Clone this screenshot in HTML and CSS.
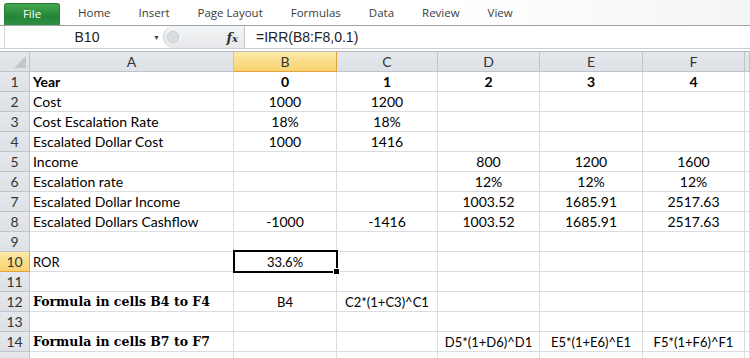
FILE: index.html
```html
<!DOCTYPE html>
<html lang="en">
<head>
    <meta charset="UTF-8">
    <title>IRR - Excel</title>
    <link rel="stylesheet" href="styles.css">
</head>
<body>
    <div class="tabs">
        <div class="tab file">File</div>
        <div class="tab">Home</div>
        <div class="tab">Insert</div>
        <div class="tab">Page Layout</div>
        <div class="tab">Formulas</div>
        <div class="tab">Data</div>
        <div class="tab">Review</div>
        <div class="tab">View</div>
    </div>
    <div class="formula-bar">
        <div class="name-box">
            <span class="cell-ref">B10</span>
            <span class="drop">&#9660;</span>
        </div>
        <div class="fx-area">
            <span class="knob"></span>
            <span class="fx">f<i>x</i></span>
        </div>
        <div class="formula">=IRR(B8:F8,0.1)</div>
    </div>
    <div class="gap"></div>
    <table class="sheet">
        <colgroup>
            <col class="c-row"><col class="c-a"><col class="c-b"><col class="c-c"><col class="c-d"><col class="c-e"><col class="c-f"><col>
        </colgroup>
        <tr class="head">
            <th class="corner"><span class="tri"></span></th>
            <th>A</th><th class="sel">B</th><th>C</th><th>D</th><th>E</th><th>F</th><th></th>
        </tr>
        <tr><th>1</th><td class="lbl b">Year</td><td class="b">0</td><td class="b">1</td><td class="b">2</td><td class="b">3</td><td class="b">4</td><td></td></tr>
        <tr><th>2</th><td class="lbl">Cost</td><td>1000</td><td>1200</td><td></td><td></td><td></td><td></td></tr>
        <tr><th>3</th><td class="lbl">Cost Escalation Rate</td><td>18%</td><td>18%</td><td></td><td></td><td></td><td></td></tr>
        <tr><th>4</th><td class="lbl">Escalated Dollar Cost</td><td>1000</td><td>1416</td><td></td><td></td><td></td><td></td></tr>
        <tr><th>5</th><td class="lbl">Income</td><td></td><td></td><td>800</td><td>1200</td><td>1600</td><td></td></tr>
        <tr><th>6</th><td class="lbl">Escalation rate</td><td></td><td></td><td>12%</td><td>12%</td><td>12%</td><td></td></tr>
        <tr><th>7</th><td class="lbl">Escalated Dollar Income</td><td></td><td></td><td>1003.52</td><td>1685.91</td><td>2517.63</td><td></td></tr>
        <tr><th>8</th><td class="lbl">Escalated Dollars Cashflow</td><td>-1000</td><td>-1416</td><td>1003.52</td><td>1685.91</td><td>2517.63</td><td></td></tr>
        <tr><th>9</th><td></td><td></td><td></td><td></td><td></td><td></td><td></td></tr>
        <tr><th class="sel">10</th><td class="lbl sm">ROR</td><td class="sm active">33.6%<span class="handle"></span></td><td></td><td></td><td></td><td></td><td></td></tr>
        <tr><th>11</th><td></td><td></td><td></td><td></td><td></td><td></td><td></td></tr>
        <tr><th>12</th><td class="lbl serif">Formula in cells B4 to F4</td><td class="sm">B4</td><td class="sm">C2*(1+C3)^C1</td><td></td><td></td><td></td><td></td></tr>
        <tr><th>13</th><td></td><td></td><td></td><td></td><td></td><td></td><td></td></tr>
        <tr><th>14</th><td class="lbl serif">Formula in cells B7 to F7</td><td></td><td></td><td class="sm">D5*(1+D6)^D1</td><td class="sm">E5*(1+E6)^E1</td><td class="sm">F5*(1+F6)^F1</td><td></td></tr>
        <tr><th></th><td></td><td></td><td></td><td></td><td></td><td></td><td></td></tr>
    </table>
</body>
</html>
```

FILE: styles.css
```css
body {
    margin: 0;
    width: 750px;
    height: 358px;
    overflow: hidden;
    background-color: #fff;
    font-family: Lato, "Liberation Sans", sans-serif;
}
.tabs {
    display: flex;
    align-items: flex-end;
    height: 26px;
    padding-left: 4px;
    box-sizing: border-box;
    border-bottom: 1px solid #9ea3a9;
    background: linear-gradient(to right, #fff 60%, #f4f5f7);
    font-family: "Open Sans", "Liberation Sans", sans-serif;
    font-size: 11.5px;
    color: #3c3c3c;
}
.tab {
    height: 22px;
    line-height: 20px;
    padding: 0 14px;
}
.tab.file {
    width: 56px;
    box-sizing: border-box;
    padding: 0;
    margin-right: 4px;
    text-align: center;
    color: #fff;
    border-radius: 3px 3px 0 0;
    background: linear-gradient(#45a84f, #23843a 60%, #2f8f40);
    border: 1px solid #2d7a34;
    border-bottom: none;
}
.formula-bar {
    display: flex;
    height: 22px;
    border-bottom: 1px solid #c9ccd1;
    font-size: 14px;
    color: #222;
}
.name-box {
    display: flex;
    align-items: center;
    width: 159px;
    margin-left: 4px;
    box-sizing: border-box;
    border-left: 1px solid #d2d5d9;
}
.cell-ref {
    flex: 1;
    text-align: center;
    padding-left: 16px;
    font-family: "Liberation Sans", sans-serif;
}
.drop {
    font-size: 7px;
    color: #444;
    width: 10px;
}
.fx-area {
    display: flex;
    align-items: center;
    justify-content: space-between;
    width: 82px;
    box-sizing: border-box;
    padding: 0 6px 0 3px;
    background: linear-gradient(#f3f4f6, #e6e8eb);
    border-radius: 11px 0 0 11px;
    border-left: 1px solid #cfd2d6;
    border-right: 1px solid #c3c7cc;
}
.knob {
    width: 10px;
    height: 10px;
    border-radius: 50%;
    background: #d9dce0;
    border: 1px solid #c6cace;
}
.fx {
    font-family: "DejaVu Serif", serif;
    font-style: italic;
    font-weight: bold;
    font-size: 13px;
    color: #333;
}
.fx i {
    font-size: 10px;
}
.formula {
    flex: 1;
    padding-left: 11px;
    line-height: 22px;
    font-family: "Liberation Sans", sans-serif;
}
.gap {
    height: 2px;
    border-bottom: 1px solid #b5b9be;
}
.sheet {
    width: 750px;
    table-layout: fixed;
    border-collapse: separate;
    border-spacing: 0;
    font-size: 14px;
    color: #000;
}
.c-row { width: 30px; }
.c-a { width: 204px; }
.c-b { width: 103px; }
.c-c { width: 101px; }
.c-d { width: 102px; }
.c-e { width: 103px; }
.c-f { width: 102px; }
tr {
    height: 20px;
}
th, td {
    padding: 0;
    height: 19px;
    border-right: 1px solid #dadcdd;
    border-bottom: 1px solid #dadcdd;
    text-align: center;
    white-space: nowrap;
    overflow: hidden;
}
th {
    font-weight: normal;
    font-size: 14px;
    color: #333;
    background: linear-gradient(#e5e8ec, #dde1e6);
    border-color: #bfc4ca;
}
.head th {
    color: #30343a;
}
th.sel {
    background: linear-gradient(#fde9a8, #f8d270);
    border-color: #e2a33d;
}
.corner {
    position: relative;
}
.tri {
    position: absolute;
    right: 3px;
    bottom: 3px;
    width: 0;
    height: 0;
    border-left: 12px solid transparent;
    border-bottom: 12px solid #c3c7cc;
}
.lbl {
    text-align: left;
    padding-left: 3px;
}
.b {
    font-weight: bold;
}
.sm {
    font-size: 13px;
}
.serif {
    font-family: "DejaVu Serif", "Liberation Serif", serif;
    font-weight: bold;
    font-size: 12.5px;
}
td.active {
    position: relative;
    overflow: visible;
}
td.active::after {
    content: "";
    position: absolute;
    left: -1px;
    top: -2px;
    right: -2px;
    bottom: -2px;
    border: 2px solid #000;
}
.handle {
    position: absolute;
    right: -4px;
    bottom: -4px;
    width: 5px;
    height: 5px;
    background: #000;
    border: 1px solid #fff;
    z-index: 1;
}
```
